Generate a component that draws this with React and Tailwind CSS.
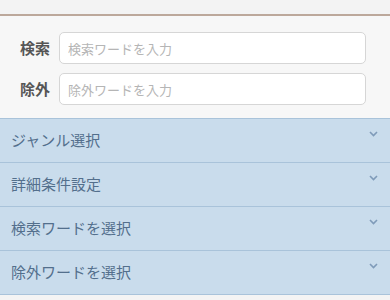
import React from 'react';

const FONT = { fontFamily: '"Noto Sans CJK JP", "Noto Sans", sans-serif' };

const sections = ['ジャンル選択', '詳細条件設定', '検索ワードを選択', '除外ワードを選択'];

function Chevron() {
  return (
    <svg width="9" height="6" viewBox="0 0 9 6" className="text-[#7f9bb9]">
      <path d="M1 1l3.5 3.5L8 1" fill="none" stroke="currentColor" strokeWidth="1.6" />
    </svg>
  );
}

export default function App() {
  return (
    <div className="w-[390px] h-[300px] bg-[#f4f4f4] overflow-hidden" style={FONT}>
      <div className="h-[14px] bg-[#f3f3f3]" />
      <div className="h-[2px] bg-[#bca89b]" />

      {/* search form */}
      <div className="bg-[#f7f7f7] pt-[16px] pb-[13px] flex flex-col gap-[9px]">
        <div className="flex items-center">
          <label className="w-[59px] pl-[20px] text-[15px] font-bold text-[#555]">検索</label>
          <input
            className="w-[307px] h-[32px] rounded-[5px] border border-[#d6d6d6] bg-white px-[8px] text-[13px] text-[#333] placeholder-[#b5b5b5] outline-none"
            placeholder="検索ワードを入力"
          />
        </div>
        <div className="flex items-center">
          <label className="w-[59px] pl-[20px] text-[15px] font-bold text-[#555]">除外</label>
          <input
            className="w-[307px] h-[32px] rounded-[5px] border border-[#d6d6d6] bg-white px-[8px] text-[13px] text-[#333] placeholder-[#b5b5b5] outline-none"
            placeholder="除外ワードを入力"
          />
        </div>
      </div>

      {/* accordion */}
      <div className="border-t border-[#a9c3da]">
        {sections.map((s) => (
          <div
            key={s}
            className="h-[44px] bg-[#c9dcec] border-b border-[#a9c3da] flex items-start justify-between pl-[11px] pr-[12px]"
          >
            <span className="text-[15px] text-[#536f8c] mt-[10px]">{s}</span>
            <span className="mt-[12px]"><Chevron /></span>
          </div>
        ))}
      </div>
    </div>
  );
}
